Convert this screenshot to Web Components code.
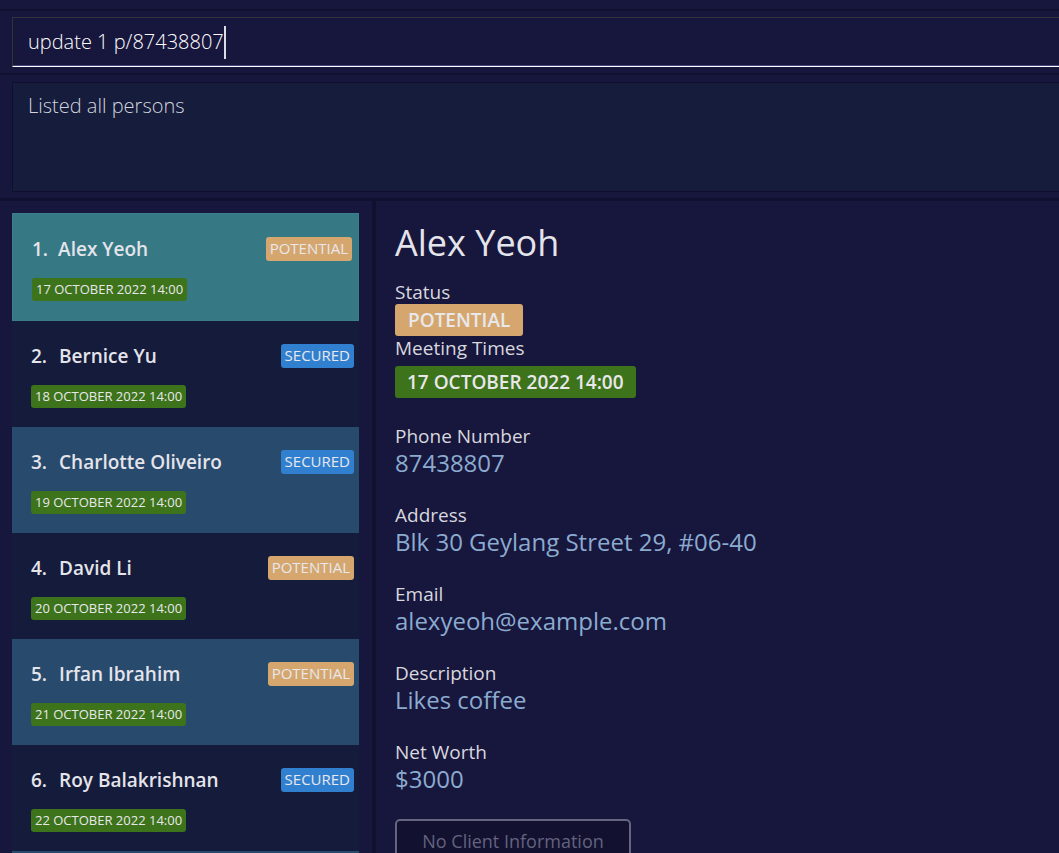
<!DOCTYPE html>
<html lang="en">
<head>
<meta charset="utf-8">
<title>Client list</title>
<style>
  html, body { height: 100%; margin: 0; }
  body {
    background: #17163d;
    color: #e4e4ea;
    font-family: "Open Sans", "Noto Sans", sans-serif;
    overflow: hidden;
  }
</style>
</head>
<body>
<client-app></client-app>
<script>
const make = (host, html) => {
  host.attachShadow({ mode: "open" }).innerHTML = html;
};

customElements.define("command-box", class extends HTMLElement {
  connectedCallback() {
    make(this, `
      <style>
        :host { display: block; padding: 6px 0 6px 12px; }
        .field {
          display: flex; align-items: center; height: 48px; padding-left: 15px;
          border-top: 1px solid #333338; border-left: 1px solid #333338;
          border-bottom: 1px solid #fff; box-shadow: inset 0 -1px #45437a;
        }
        input {
          field-sizing: content; margin: 0; padding: 0; border: 0; outline: 0;
          background: none; color: #fff; font: 300 20px/30px "Open Sans", sans-serif;
        }
        .caret { width: 2px; height: 33px; background: #dcdce6; }
      </style>
      <div class="field">
        <input type="text" aria-label="Command" value="${this.getAttribute("value")}">
        <span class="caret"></span>
      </div>`);
  }
});

customElements.define("result-display", class extends HTMLElement {
  connectedCallback() {
    make(this, `
      <style>
        :host { display: block; padding: 7px 0 6px 12px; }
        .box {
          min-height: 100px; padding: 8px 15px 0; background: #151c3c;
          border: solid #10102e; border-width: 1px 0 1px 1px;
          font-weight: 300; font-size: 20px; line-height: 30px; color: #d2d5de;
        }
      </style>
      <div class="box"><slot></slot></div>`);
  }
});

customElements.define("tag-label", class extends HTMLElement {
  connectedCallback() {
    make(this, `
      <style>
        :host {
          display: inline-block; padding: 0 4px 2px;
          border-radius: 3px; white-space: nowrap; color: #e8e8ec;
          font-size: 15px; line-height: 22px;
        }
        :host([kind="potential"]) { background: #d5a76f; }
        :host([kind="secured"]) { background: #3180d0; }
        :host([kind="date"]) {
          padding-bottom: 1px; background: #3d731b;
          font-size: 13px; line-height: 22px; font-weight: 500;
        }
        :host([large]) { padding: 0 12px; font-size: 19px; line-height: 32px; font-weight: 600; }
        :host([large][kind="potential"]) { padding: 0 13px; }
      </style>
      <slot></slot>`);
  }
});

customElements.define("person-card", class extends HTMLElement {
  connectedCallback() {
    const a = n => this.getAttribute(n);
    make(this, `
      <style>
        :host { display: block; padding: 23px 5px 19px 19px; background: #151b3b; }
        :host(:nth-child(odd)) { background: #284a6d; }
        :host([selected]) { padding-right: 6px; background: #367985; border: 1px solid #3b7d8c; }
        .row { display: flex; justify-content: space-between; align-items: center; margin-bottom: 17px; }
        h2 { display: flex; gap: 12px; margin: 0; font-weight: 600; font-size: 19px; line-height: 24px; }
        :host([selected]) h2 { gap: 10px; }
        .date { display: flex; }
      </style>
      <div class="row">
        <h2><span>${a("number")}.</span><span>${a("name")}</span></h2>
        <tag-label kind="${a("status").toLowerCase()}">${a("status")}</tag-label>
      </div>
      <div class="date"><tag-label kind="date">${a("date")}</tag-label></div>`);
  }
});

customElements.define("person-list", class extends HTMLElement {
  connectedCallback() {
    make(this, `
      <style>
        :host {
          display: flex; flex-direction: column; flex: 0 0 auto; width: 347px;
          padding: 12px 13px 0 12px; border-right: 4px solid #111030;
        }
        .rest { flex: 1; background: #284a6d; }
      </style>
      <slot></slot>
      <div class="rest"></div>`);
  }
});

customElements.define("detail-field", class extends HTMLElement {
  connectedCallback() {
    make(this, `
      <style>
        :host { display: block; margin-bottom: 25px; }
        .label { font-size: 19px; line-height: 24px; color: #d8d8de; }
        .value { font-size: 24px; line-height: 30px; color: #8babcf; }
      </style>
      <div class="label">${this.getAttribute("label")}</div>
      <div class="value"><slot></slot></div>`);
  }
});

customElements.define("person-detail", class extends HTMLElement {
  connectedCallback() {
    make(this, `
      <style>
        :host { display: block; flex: 1; min-width: 0; padding: 18px 19px 0; }
        h1 { margin: 0 0 13px; font-weight: 400; font-size: 36px; line-height: 48px; }
        .label { font-size: 19px; line-height: 24px; color: #d8d8de; }
        .tag { display: flex; }
        .times { padding: 6px 0 26px; }
        button {
          min-width: 236px; height: 44px; padding: 0 24px; border: 2px solid #66647f; border-radius: 5px;
          background: #121130; color: #64637e; font: 400 18px/24px "Open Sans", sans-serif;
        }
      </style>
      <h1>Alex Yeoh</h1>
      <div class="label">Status</div>
      <div class="tag"><tag-label kind="potential" large>POTENTIAL</tag-label></div>
      <div class="label">Meeting Times</div>
      <div class="tag times"><tag-label kind="date" large>17 OCTOBER 2022 14:00</tag-label></div>
      <detail-field label="Phone Number">87438807</detail-field>
      <detail-field label="Address">Blk 30 Geylang Street 29, #06-40</detail-field>
      <detail-field label="Email">alexyeoh@example.com</detail-field>
      <detail-field label="Description">Likes coffee</detail-field>
      <detail-field label="Net Worth">$3000</detail-field>
      <button type="button" disabled>No Client Information</button>`);
  }
});

customElements.define("client-app", class extends HTMLElement {
  connectedCallback() {
    make(this, `
      <style>
        :host { display: flex; flex-direction: column; height: 100vh; overflow: hidden; }
        .top { height: 9px; flex: none; border-bottom: 2px solid #111030; }
        command-box, result-display { flex: none; }
        result-display { border-top: 2px solid #111030; border-bottom: 3px solid #111030; }
        main { flex: 1; display: flex; min-height: 0; }
      </style>
      <div class="top"></div>
      <command-box value="update 1 p/87438807"></command-box>
      <result-display>Listed all persons</result-display>
      <main>
        <person-list>
          <person-card selected number="1" name="Alex Yeoh" status="POTENTIAL" date="17 OCTOBER 2022 14:00"></person-card>
          <person-card number="2" name="Bernice Yu" status="SECURED" date="18 OCTOBER 2022 14:00"></person-card>
          <person-card number="3" name="Charlotte Oliveiro" status="SECURED" date="19 OCTOBER 2022 14:00"></person-card>
          <person-card number="4" name="David Li" status="POTENTIAL" date="20 OCTOBER 2022 14:00"></person-card>
          <person-card number="5" name="Irfan Ibrahim" status="POTENTIAL" date="21 OCTOBER 2022 14:00"></person-card>
          <person-card number="6" name="Roy Balakrishnan" status="SECURED" date="22 OCTOBER 2022 14:00"></person-card>
        </person-list>
        <person-detail></person-detail>
      </main>`);
  }
});
</script>
</body>
</html>
